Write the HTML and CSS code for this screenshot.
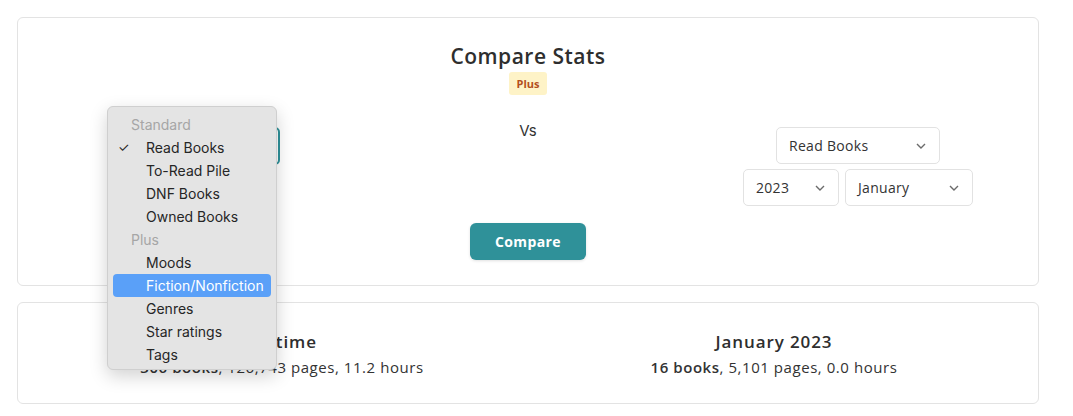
FILE: index.html
```html
<!DOCTYPE html>
<html lang="en">
<head>
  <meta charset="UTF-8">
  <meta name="viewport" content="width=device-width, initial-scale=1.0">
  <title>Compare Stats</title>
  <link rel="stylesheet" href="styles.css">
</head>
<body>
  <div class="page">
    <div class="card compare-card">
      <h1>Compare Stats</h1>
      <span class="badge">Plus</span>

      <div class="compare-row">
        <div class="side">
          <div class="select focused wide"><span>Read Books</span><svg class="chev" viewBox="0 0 10 6"><path d="M1 1l4 4 4-4"/></svg></div>
        </div>
        <div class="vs">Vs</div>
        <div class="side">
          <div class="select wide"><span>Read Books</span><svg class="chev" viewBox="0 0 10 6"><path d="M1 1l4 4 4-4"/></svg></div>
          <div class="date-row">
            <div class="select year"><span>2023</span><svg class="chev" viewBox="0 0 10 6"><path d="M1 1l4 4 4-4"/></svg></div>
            <div class="select month"><span>January</span><svg class="chev" viewBox="0 0 10 6"><path d="M1 1l4 4 4-4"/></svg></div>
          </div>
        </div>
      </div>

      <button class="compare-btn">Compare</button>
    </div>

    <div class="card result-card">
      <div class="result-cols">
        <div class="result">
          <h2>All time</h2>
          <p><b>306 books</b>, 126,743 pages, 11.2 hours</p>
        </div>
        <div class="result">
          <h2>January 2023</h2>
          <p><b>16 books</b>, 5,101 pages, 0.0 hours</p>
        </div>
      </div>
    </div>

    <!-- native select popup, open over the left picker -->
    <ul class="menu">
      <li class="group">Standard</li>
      <li class="checked">Read Books</li>
      <li>To-Read Pile</li>
      <li>DNF Books</li>
      <li>Owned Books</li>
      <li class="group">Plus</li>
      <li>Moods</li>
      <li class="active">Fiction/Nonfiction</li>
      <li>Genres</li>
      <li>Star ratings</li>
      <li>Tags</li>
    </ul>
  </div>
</body>
</html>
```

FILE: styles.css
```css
body {
  margin: 0;
  background: #fff;
  font-family: "Open Sans", "Noto Sans", sans-serif;
  color: #333;
}
.page {
  position: relative;
  padding: 17px 34px 0 17px;
}
.card {
  background: #fff;
  border: 1px solid #e3e3e3;
  border-radius: 6px;
}
.compare-card {
  padding-top: 24px;
  box-sizing: border-box;
  height: 269px;
  display: flex;
  flex-direction: column;
  align-items: center;
}
h1 {
  margin: 0;
  font-size: 21px;
  line-height: 28px;
  font-weight: 600;
  color: #2e2e2e;
  letter-spacing: 0.5px;
}
.badge {
  margin-top: 2px;
  background: #fef3c7;
  color: #b4501c;
  font-size: 11px;
  font-weight: 700;
  line-height: 23px;
  padding: 0 8px;
  border-radius: 3px;
}
.compare-row {
  display: grid;
  grid-template-columns: repeat(3, 330px);
  margin-top: 32px;
  align-items: start;
}
.side {
  display: flex;
  flex-direction: column;
  align-items: center;
  gap: 5px;
}
.vs {
  text-align: center;
  font-family: "Inter", sans-serif;
  font-size: 15px;
  color: #333;
  line-height: 20px;
  margin-top: -6px;
}
.select {
  box-sizing: border-box;
  height: 37px;
  border: 1px solid #e2e2e2;
  border-radius: 5px;
  display: flex;
  align-items: center;
  justify-content: space-between;
  padding: 0 13px 0 12px;
  font-size: 14px;
  letter-spacing: 0.3px;
  color: #333;
}
.select.wide { width: 164px; }
.select.year { width: 96px; }
.select.month { width: 128px; }
.select.focused {
  border: 2px solid #2f9199;
  height: 38px;
}
.chev {
  width: 10px;
  height: 6px;
  fill: none;
  stroke: #6b6b6b;
  stroke-width: 1.4;
}
.date-row {
  display: flex;
  gap: 6px;
}
.compare-btn {
  margin-top: 17px;
  width: 116px;
  height: 37px;
  border: none;
  border-radius: 6px;
  background: #2f9199;
  color: #fff;
  font-family: inherit;
  font-size: 14px;
  font-weight: 700;
  letter-spacing: 0.4px;
  box-shadow: 0 1px 3px rgba(0, 0, 0, 0.12);
}
.result-card {
  margin-top: 16px;
  height: 102px;
  box-sizing: border-box;
  padding-top: 27px;
}
.result-cols {
  display: grid;
  grid-template-columns: 492px 492px;
  justify-content: center;
}
.result {
  text-align: center;
}
.result h2 {
  margin: 0;
  font-size: 17px;
  line-height: 24px;
  font-weight: 600;
  letter-spacing: 0.9px;
  color: #2e2e2e;
}
.result p {
  margin: 2px 0 0;
  font-size: 15px;
  line-height: 22px;
  letter-spacing: 0.55px;
  color: #333;
}
.result p b {
  font-weight: 600;
}
.menu {
  position: absolute;
  left: 107px;
  top: 106px;
  width: 170px;
  height: 264px;
  box-sizing: border-box;
  margin: 0;
  padding: 6px 5px 5px;
  list-style: none;
  background: #e4e4e4;
  border: 1px solid #cfcfcf;
  border-radius: 6px;
  box-shadow: 0 6px 18px rgba(0, 0, 0, 0.18);
  font-family: "Inter", sans-serif;
  font-size: 14px;
  color: #262626;
}
.menu li {
  position: relative;
  height: 23px;
  line-height: 23px;
  padding-left: 33px;
  border-radius: 4px;
}
.menu li.group {
  padding-left: 18px;
  color: #a6a6a6;
}
.menu li.checked::before {
  content: "\2713";
  position: absolute;
  left: 5px;
  font-size: 13px;
}
.menu li.active {
  background: #5aa0f8;
  color: #fff;
}
```
